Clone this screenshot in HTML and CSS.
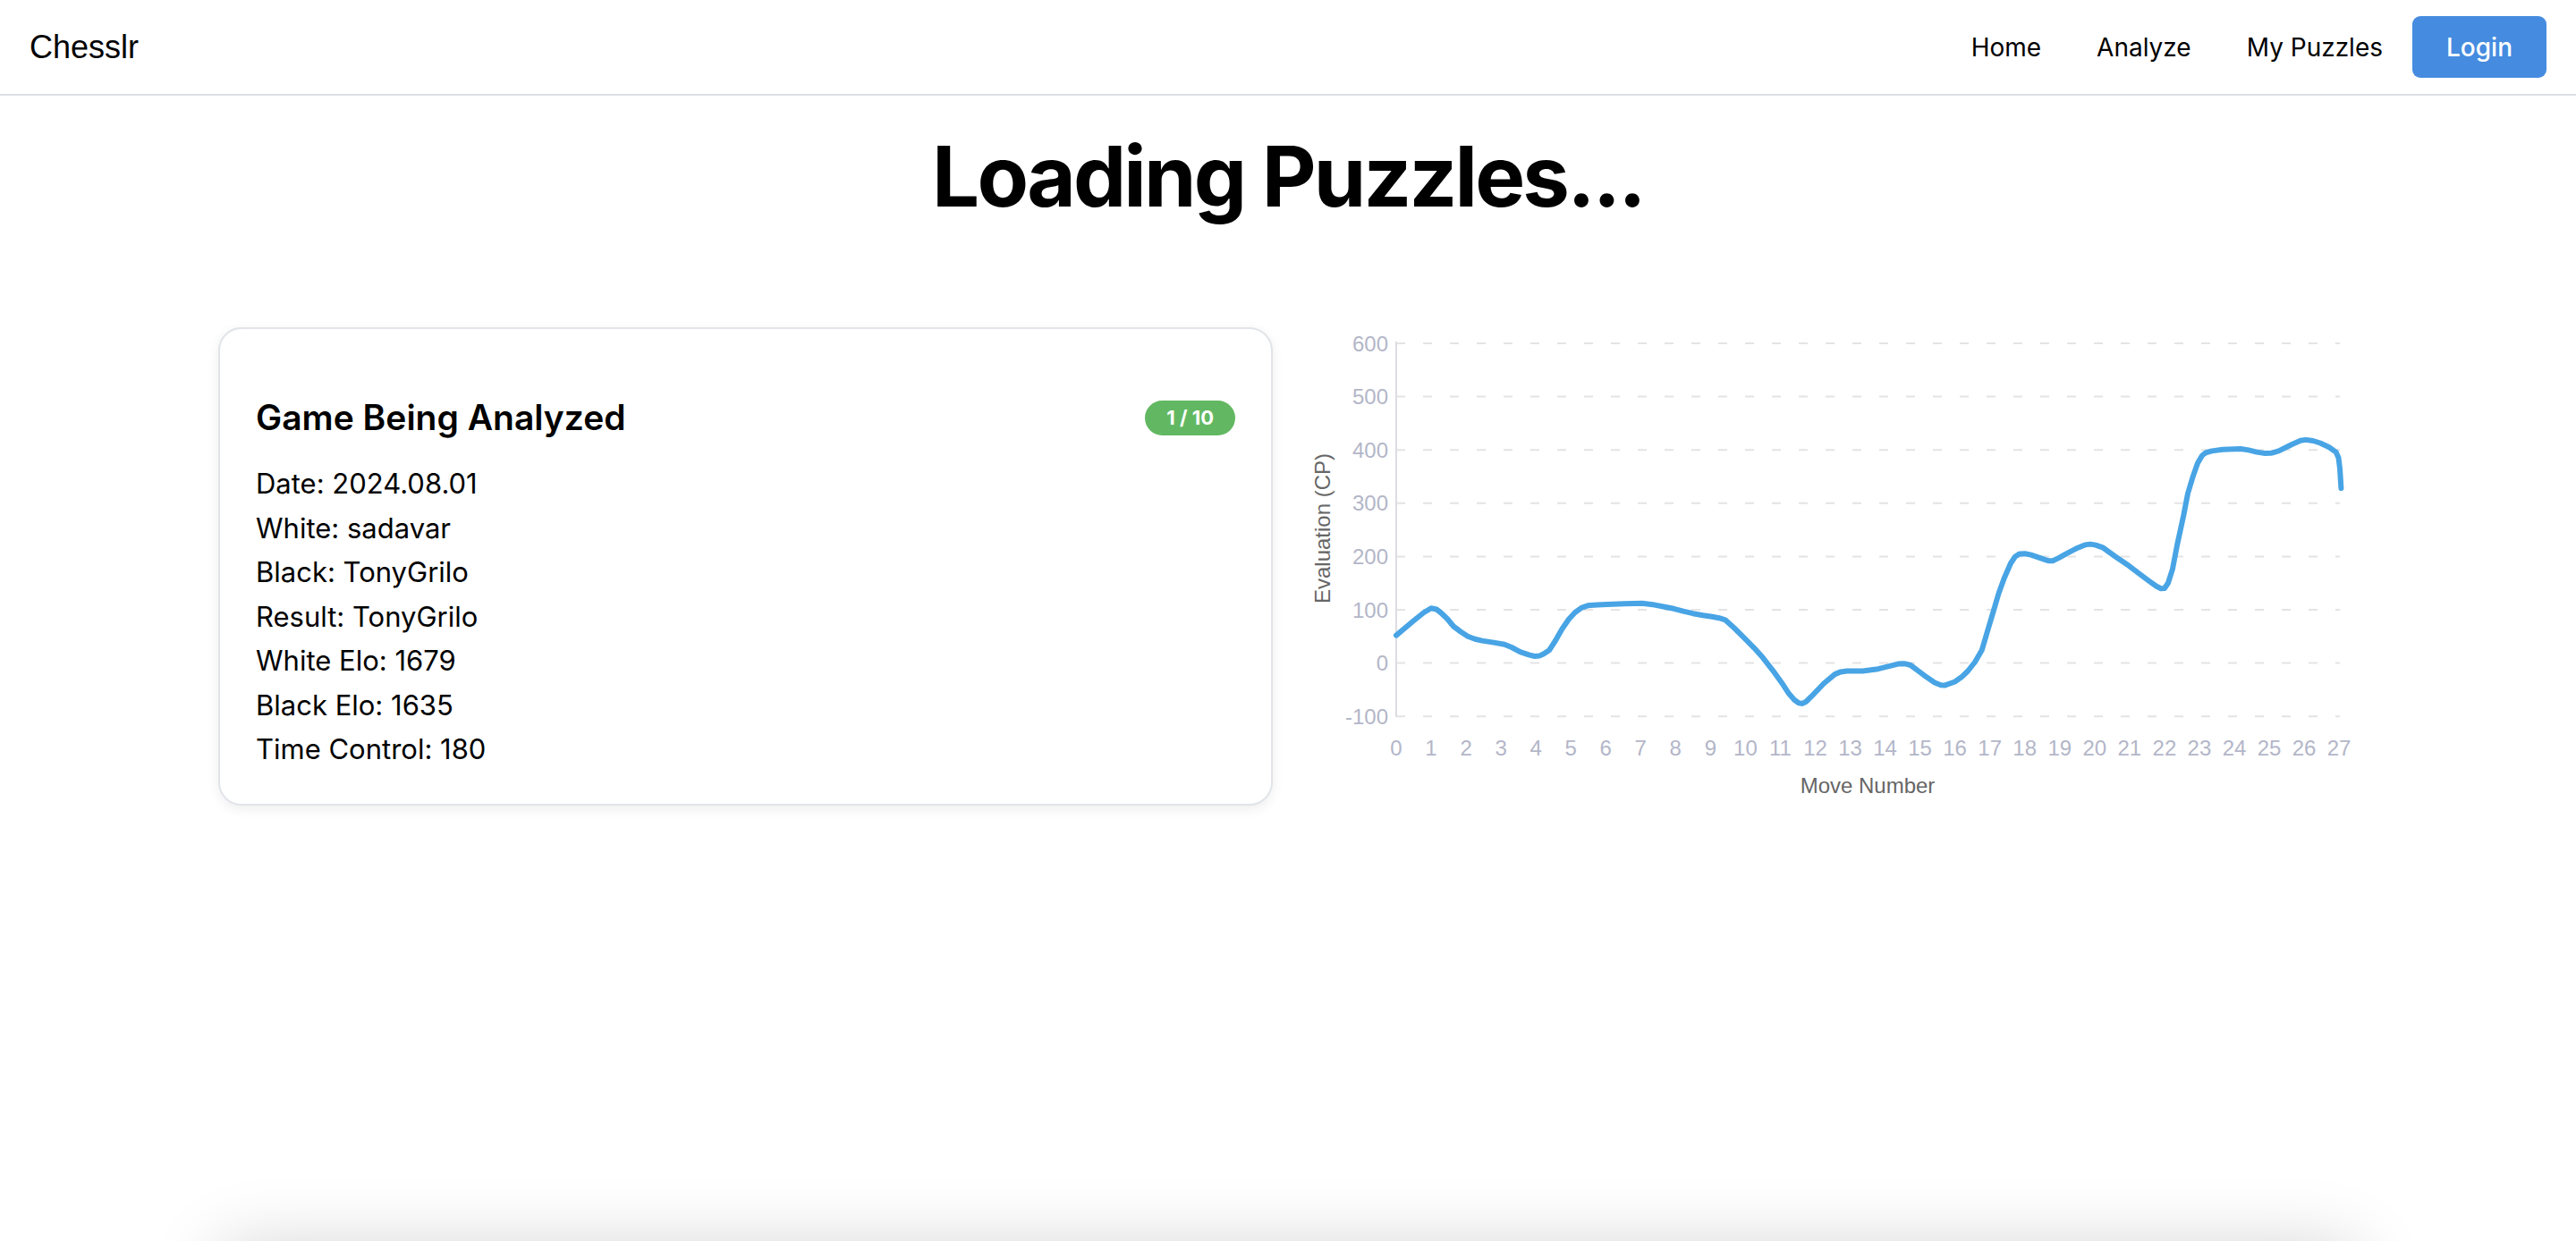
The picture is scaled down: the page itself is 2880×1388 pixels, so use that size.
FILE: index.html
```html
<!DOCTYPE html>
<html lang="en">
<head>
<meta charset="utf-8">
<title>Chesslr</title>
<link rel="stylesheet" href="styles.css">
</head>
<body>
<header class="navbar">
  <div class="brand">Chesslr</div>
  <nav class="nav-links">
    <a class="nav-link" href="#">Home</a>
    <a class="nav-link" href="#">Analyze</a>
    <a class="nav-link" href="#">My Puzzles</a>
    <button class="login-btn" type="button">Login</button>
  </nav>
</header>
<main class="page">
  <h1 class="page-title">Loading Puzzles...</h1>
  <section class="analysis-row">
    <div class="game-card">
      <div class="card-header">
        <h2 class="card-title">Game Being Analyzed</h2>
        <span class="badge">1 / 10</span>
      </div>
      <div class="game-info">
        <p>Date: 2024.08.01</p>
        <p>White: sadavar</p>
        <p>Black: TonyGrilo</p>
        <p>Result: TonyGrilo</p>
        <p>White Elo: 1679</p>
        <p>Black Elo: 1635</p>
        <p>Time Control: 180</p>
      </div>
    </div>
    <div class="chart-wrap">
      <svg class="eval-chart" width="1179" height="536" viewBox="1457 366 1179 536" xmlns="http://www.w3.org/2000/svg">
        <g class="grid">
          <line x1="1561" y1="384" x2="2616" y2="384"/>
          <line x1="1561" y1="443.6" x2="2616" y2="443.6"/>
          <line x1="1561" y1="503.2" x2="2616" y2="503.2"/>
          <line x1="1561" y1="562.8" x2="2616" y2="562.8"/>
          <line x1="1561" y1="622.4" x2="2616" y2="622.4"/>
          <line x1="1561" y1="682" x2="2616" y2="682"/>
          <line x1="1561" y1="741.6" x2="2616" y2="741.6"/>
          <line x1="1561" y1="801.2" x2="2616" y2="801.2"/>
        </g>
        <line class="axis" x1="1561" y1="382" x2="1561" y2="802"/>
        <g class="ytick">
          <text x="1552" y="384">600</text>
          <text x="1552" y="443.6">500</text>
          <text x="1552" y="503.2">400</text>
          <text x="1552" y="562.8">300</text>
          <text x="1552" y="622.4">200</text>
          <text x="1552" y="682">100</text>
          <text x="1552" y="741.6">0</text>
          <text x="1552" y="801.2">-100</text>
        </g>
        <g class="xtick">
          <text x="1561" y="836">0</text>
          <text x="1600" y="836">1</text>
          <text x="1639.1" y="836">2</text>
          <text x="1678.1" y="836">3</text>
          <text x="1717.2" y="836">4</text>
          <text x="1756.2" y="836">5</text>
          <text x="1795.2" y="836">6</text>
          <text x="1834.3" y="836">7</text>
          <text x="1873.3" y="836">8</text>
          <text x="1912.4" y="836">9</text>
          <text x="1951.4" y="836">10</text>
          <text x="1990.4" y="836">11</text>
          <text x="2029.5" y="836">12</text>
          <text x="2068.5" y="836">13</text>
          <text x="2107.6" y="836">14</text>
          <text x="2146.6" y="836">15</text>
          <text x="2185.6" y="836">16</text>
          <text x="2224.7" y="836">17</text>
          <text x="2263.7" y="836">18</text>
          <text x="2302.8" y="836">19</text>
          <text x="2341.8" y="836">20</text>
          <text x="2380.8" y="836">21</text>
          <text x="2419.9" y="836">22</text>
          <text x="2458.9" y="836">23</text>
          <text x="2498" y="836">24</text>
          <text x="2537" y="836">25</text>
          <text x="2576" y="836">26</text>
          <text x="2615.1" y="836">27</text>
        </g>
        <text class="axis-title" x="2088" y="878">Move Number</text>
        <text class="axis-title" x="1478" y="591" transform="rotate(-90 1478 591)">Evaluation (CP)</text>
        <path class="eval-line" d="M1561,710.6 L1581.7,693.3 L1592,685 L1600,680.2 L1606,681.5 L1610.6,685 L1618,692 L1625,700.5 L1633,706.5 L1641,711.8 L1649,714.8 L1657,716.6 L1670,718.6 L1682,720.7 L1690,724 L1699.6,729.1 L1710,732.6 L1716,734 L1721,733.6 L1726,731.2 L1732,727.3 L1739,716.5 L1746.4,703.5 L1754,692.5 L1760.9,685 L1768,679.8 L1775.7,677.2 L1786,676.4 L1796.8,676 L1816,675.2 L1835.8,674.8 L1849.9,676.6 L1861,678.8 L1871.4,680.8 L1882,683.7 L1892.8,686.2 L1904,688.2 L1914.3,689.7 L1922,691.2 L1928.8,693.3 L1939,702.5 L1950.2,713.6 L1961,724.6 L1970.9,735.6 L1982,749.8 L1992.4,764.2 L2000,775.8 L2006.1,782.7 L2011,786.2 L2014.6,786.9 L2019,785 L2026.7,777.4 L2039,764.5 L2051.4,754.1 L2058,751.4 L2065,750.5 L2082.6,750.5 L2099.8,748.2 L2114,744.6 L2122,742.6 L2127.1,742.2 L2131,742.6 L2136.1,744 L2145,750.6 L2153.6,757.1 L2163,763.4 L2170,766.3 L2174,766.6 L2185.6,762.5 L2193,757.3 L2200.1,750.5 L2208,740.5 L2215.7,727.3 L2222,706 L2228.6,683.8 L2234.6,663.5 L2240.7,646.8 L2248,630 L2253,622.5 L2258,619.4 L2264,619.2 L2270.8,620.6 L2281,624.2 L2290,627.2 L2295,627.2 L2302,623.9 L2310,619.4 L2323,612.7 L2331,609.4 L2337,608.6 L2343,609.6 L2350.8,612.3 L2365,622.5 L2380.5,633.1 L2391,641.2 L2402.7,649.8 L2411,655.7 L2416,658.2 L2420,658 L2424,652 L2428.9,636.7 L2434,610 L2441.4,575.9 L2446,552 L2451.9,532.4 L2457,518 L2462,509.5 L2466,506.4 L2473,504.4 L2485,502.8 L2505,502 L2514,503.4 L2523,505.6 L2531,506.9 L2539,506.8 L2547.6,504.4 L2562,497.2 L2572,492.8 L2578,491.9 L2586,493 L2594,495.5 L2604,500.2 L2611.6,505.6 L2614.5,512 L2616,524 L2617.4,546"/>
      </svg>
    </div>
  </section>
  <section class="board-panel"></section>
</main>
</body>
</html>
```

FILE: styles.css
```css
html, body {
  margin: 0;
  padding: 0;
  background: #ffffff;
  overflow: hidden;
}

body {
  font-family: Inter, "Noto Sans", sans-serif;
  color: #000000;
}

.navbar {
  height: 105px;
  border-bottom: 2px solid #dcdfe3;
  display: flex;
  align-items: center;
  justify-content: space-between;
  padding: 0 33px;
}

.brand {
  font-family: "Liberation Sans", Arial, sans-serif;
  font-size: 36px;
  color: #000;
}

.nav-links {
  display: flex;
  align-items: center;
}

.nav-link {
  font-size: 28px;
  color: #000;
  text-decoration: none;
  padding: 0 31px;
}

.login-btn {
  font-family: Inter, sans-serif;
  font-size: 28px;
  font-weight: 500;
  color: #ffffff;
  background: #458ce0;
  border: none;
  border-radius: 9px;
  height: 69px;
  padding: 0 38px;
  margin-left: 2px;
}

.page {
  display: block;
}

.page-title {
  margin: 32px 0 0;
  text-align: center;
  font-size: 94px;
  line-height: 116px;
  font-weight: 700;
  letter-spacing: -0.03em;
}

.analysis-row {
  width: 2392px;
  margin: 111px auto 0;
  display: flex;
  gap: 34px;
  align-items: flex-start;
}

.game-card {
  box-sizing: border-box;
  flex: 0 0 1179px;
  border: 2px solid #e1e4e8;
  border-radius: 26px;
  box-shadow: 0 4px 14px rgba(0, 0, 0, 0.07);
  padding: 40px 40px 36px;
  background: #fff;
}

.card-header {
  margin-top: 36px;
  display: flex;
  align-items: center;
  justify-content: space-between;
}

.card-title {
  margin: 0;
  font-size: 39px;
  line-height: 46px;
  font-weight: 600;
}

.badge {
  background: #62b862;
  color: #fff;
  font-size: 22px;
  font-weight: 700;
  height: 39px;
  line-height: 39px;
  padding: 0 24px;
  border-radius: 20px;
}

.game-info {
  margin-top: 26px;
}

.game-info p {
  margin: 0;
  font-size: 31px;
  line-height: 49.5px;
}

.chart-wrap {
  flex: 0 0 1179px;
}

.eval-chart {
  display: block;
  font-family: "Liberation Sans", Arial, sans-serif;
}

.grid line {
  stroke: #e4e4e6;
  stroke-width: 2;
  stroke-dasharray: 10 20;
}

.axis {
  stroke: #dcdde2;
  stroke-width: 2;
}

.ytick text {
  font-size: 24px;
  fill: #b3b6c8;
  text-anchor: end;
  dominant-baseline: central;
}

.xtick text {
  font-size: 24px;
  fill: #b3b6c8;
  text-anchor: middle;
  dominant-baseline: central;
}

.axis-title {
  font-size: 24px;
  fill: #666666;
  text-anchor: middle;
  dominant-baseline: central;
}

.eval-line {
  fill: none;
  stroke: #48a4e4;
  stroke-width: 6;
  stroke-linejoin: round;
  stroke-linecap: round;
}

.board-panel {
  width: 2392px;
  height: 600px;
  margin: 493px auto 0;
  background: #fff;
  border-radius: 26px;
  box-shadow: 0 0 80px rgba(0, 0, 0, 0.18);
}
```
